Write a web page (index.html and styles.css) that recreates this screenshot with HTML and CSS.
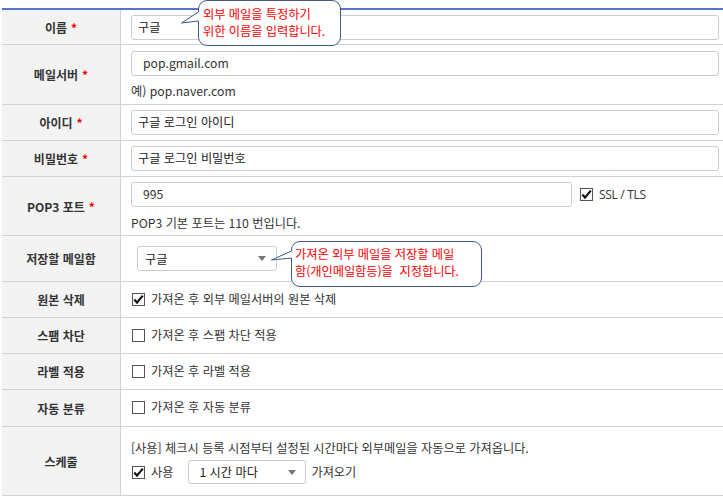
FILE: index.html
```html
<!DOCTYPE html>
<html lang="ko">
<head>
<meta charset="utf-8">
<title>외부 메일 설정</title>
<link rel="stylesheet" href="styles.css">
</head>
<body>
<div class="form">
  <div class="row r-name">
    <div class="label">이름 <span class="req">*</span></div>
    <div class="field">
      <div class="input">구글</div>
      <div class="tip tip-name">
        <svg class="tail" width="20" height="30" viewBox="0 0 20 30"><polygon points="17.5,12 0.5,23 17.5,21 19.5,21 19.5,12" fill="#fff"/><polyline points="17.5,12 0.5,23 17.5,21" fill="none" stroke="#3f5c86" stroke-width="1"/></svg>
        <p>외부 메일을 특정하기</p>
        <p>위한 이름을 입력합니다.</p>
      </div>
    </div>
  </div>
  <div class="row r-server">
    <div class="label">메일서버 <span class="req">*</span></div>
    <div class="field">
      <div class="input val">pop.gmail.com</div>
      <div class="hint">예) pop.naver.com</div>
    </div>
  </div>
  <div class="row r-plain">
    <div class="label">아이디 <span class="req">*</span></div>
    <div class="field"><div class="input">구글 로그인 아이디</div></div>
  </div>
  <div class="row r-plain">
    <div class="label">비밀번호 <span class="req">*</span></div>
    <div class="field"><div class="input">구글 로그인 비밀번호</div></div>
  </div>
  <div class="row r-port">
    <div class="label">POP3 포트 <span class="req">*</span></div>
    <div class="field">
      <div class="port-line">
        <div class="input val port">995</div>
        <label class="check"><span class="box on"><svg width="13" height="13" viewBox="0 0 13 13"><path d="M2.3 6.6 L5 9.6 L10.8 2.6" fill="none" stroke="#111" stroke-width="2.2"/></svg></span><span class="ssl">SSL / TLS</span></label>
      </div>
      <div class="hint">POP3 기본 포트는 110 번입니다.</div>
    </div>
  </div>
  <div class="row r-box">
    <div class="label">저장할 메일함</div>
    <div class="field">
      <div class="select mailbox"><span>구글</span><i class="arrow"></i></div>
      <div class="tip tip-box">
        <svg class="tail" width="24" height="30" viewBox="0 0 24 30"><polygon points="20.5,10 0.5,19 20.5,17 22.5,17 22.5,10" fill="#fff"/><polyline points="20.5,10 0.5,19 20.5,17" fill="none" stroke="#3f5c86" stroke-width="1"/></svg>
        <p>가져온 외부 메일을 저장할 메일</p>
        <p>함(개인메일함등)을&nbsp; 지정합니다.</p>
      </div>
    </div>
  </div>
  <div class="row r-check">
    <div class="label">원본 삭제</div>
    <div class="field">
      <label class="check"><span class="box on"><svg width="13" height="13" viewBox="0 0 13 13"><path d="M2.3 6.6 L5 9.6 L10.8 2.6" fill="none" stroke="#111" stroke-width="2.2"/></svg></span>가져온 후 외부 메일서버의 원본 삭제</label>
    </div>
  </div>
  <div class="row r-check">
    <div class="label">스팸 차단</div>
    <div class="field">
      <label class="check"><span class="box"></span>가져온 후 스팸 차단 적용</label>
    </div>
  </div>
  <div class="row r-check">
    <div class="label">라벨 적용</div>
    <div class="field">
      <label class="check"><span class="box"></span>가져온 후 라벨 적용</label>
    </div>
  </div>
  <div class="row r-check r-auto">
    <div class="label">자동 분류</div>
    <div class="field">
      <label class="check"><span class="box"></span>가져온 후 자동 분류</label>
    </div>
  </div>
  <div class="row r-sched">
    <div class="label">스케줄</div>
    <div class="field">
      <div class="desc">[사용] 체크시 등록 시점부터 설정된 시간마다 외부메일을 자동으로 가져옵니다.</div>
      <div class="sched-line">
        <label class="check"><span class="box on"><svg width="13" height="13" viewBox="0 0 13 13"><path d="M2.3 6.6 L5 9.6 L10.8 2.6" fill="none" stroke="#111" stroke-width="2.2"/></svg></span>사용</label>
        <div class="select interval"><span>1 시간 마다</span><i class="arrow"></i></div>
        <span class="fetch">가져오기</span>
      </div>
    </div>
  </div>
</div>
</body>
</html>
```
FILE: styles.css
```css
* { box-sizing: border-box; }
html, body { margin: 0; padding: 0; background: #fff; }
body {
  font-family: "Noto Sans CJK KR", "Noto Sans", sans-serif;
  font-size: 12.2px;
  color: #333;
  letter-spacing: 0;
}
p { margin: 0; }

.form {
  margin: 8px 0 0 2px;
  width: 721px;
  border-top: 2px solid #5a73d2;
}
.row {
  display: grid;
  grid-template-columns: 119px 1fr;
  border-bottom: 1px solid #d2d2d2;
}
.label {
  background: #f3f3f3;
  border-right: 1px solid #d2d2d2;
  display: flex;
  align-items: center;
  justify-content: center;
  font-weight: bold;
  font-size: 12px;
  color: #333;
}
.req { color: #e00; margin-left: 4px; }
.field {
  position: relative;
  padding: 5px 4px 5px 10px;
}
.input {
  height: 25px;
  border: 1px solid #cccccc;
  border-radius: 3px;
  padding: 0 6px;
  line-height: 23px;
  color: #222;
  background: #fff;
}
.input.val { padding-left: 11px; color: #333; }
.hint { margin-top: 6px; line-height: 18px; color: #333; }

.r-name .field { padding-top: 5px; padding-bottom: 4px; }
.r-server .field { padding-top: 6px; padding-bottom: 4px; }
.r-port .field { padding-top: 5px; padding-bottom: 3px; }
.r-port .hint { margin-top: 7px; }

.port-line { display: flex; align-items: center; }
.port { width: 441px; }
.port-line .check { margin-left: 7px; }
.ssl { font-family: "Open Sans", "Noto Sans", sans-serif; font-size: 12px; letter-spacing: -0.3px; color: #333; }

.check { display: flex; align-items: center; height: 18px; line-height: 18px; color: #333; }
.box {
  width: 13px;
  height: 13px;
  border: 1px solid #555;
  background: #fff;
  margin: 0 6px 0 1px;
  position: relative;
  flex: none;
}
.box svg { position: absolute; left: -1px; top: -1px; }

.r-box .field { padding: 10px 4px 10px 16px; }
.select {
  height: 25px;
  border: 1px solid #cccccc;
  border-radius: 3px;
  background: #fff;
  display: flex;
  align-items: center;
  justify-content: space-between;
  color: #222;
}
.mailbox { width: 140px; padding: 0 10px 0 7px; }
.arrow {
  width: 0; height: 0;
  border-left: 4px solid transparent;
  border-right: 4px solid transparent;
  border-top: 5px solid #777;
}

.r-check .field { padding: 8px 4px 9px 10px; }
.r-auto .field { padding-bottom: 10px; }

.r-sched .field { padding: 12px 4px 11px 10px; }
.desc { line-height: 18px; }
.sched-line { display: flex; align-items: center; margin-top: 3px; }
.interval { width: 118px; margin-left: 15px; padding: 0 9px 0 10px; height: 24px; }
.fetch { margin-left: 5px; }

.tip {
  position: absolute;
  background: #fff;
  border: 1px solid #3f5c86;
  border-radius: 9px;
  color: #ff0000;
  font-size: 12.3px;
  line-height: 17px;
  letter-spacing: -0.1px;
  z-index: 2;
}
.tip .tail { position: absolute; overflow: visible; }
.tip-name { left: 77px; top: -10px; width: 143px; height: 46px; padding: 5px 0 0 4px; }
.tip-name .tail { left: -18px; top: -1px; }
.tip-box { left: 170px; top: 5px; width: 191px; height: 46px; padding: 4px 0 0 3px; }
.tip-box .tail { left: -21px; top: -1px; }
```
